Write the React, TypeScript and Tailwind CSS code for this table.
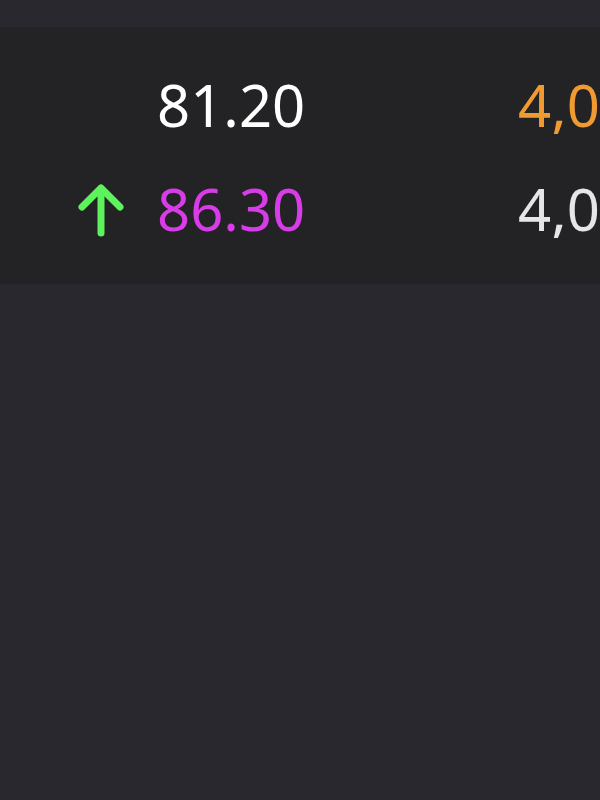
import React from "react";

const ArrowUp = () => (
  <svg width="48" height="56" viewBox="0 0 48 56" fill="none" stroke="#5ef35c" strokeWidth="7" strokeLinecap="round" strokeLinejoin="round">
    <path d="M24 50 V6" />
    <path d="M5 24 L24 5 L43 24" />
  </svg>
);

export default function App() {
  return (
    <div className="w-[600px] h-[800px] bg-[#29282e] overflow-hidden" style={{ fontFamily: '"Noto Sans", "Open Sans", sans-serif' }}>
      <div className="h-[28px] bg-[#29282e] border-b border-[#252428]" />
      <div className="h-[256px] bg-[#232325] pt-[25px] flex flex-col">
        <div className="h-[104px] flex items-center">
          <div className="w-[157px]"></div>
          <div className="w-[361px] text-[58px] text-white leading-none">81.20</div>
          <div className="flex-1 text-[58px] text-[#f09a32] leading-none whitespace-nowrap overflow-hidden">4,000</div>
        </div>
        <div className="h-[104px] flex items-center">
          <div className="w-[157px] flex justify-start pl-[77px] pt-[4px]">
            <ArrowUp />
          </div>
          <div className="w-[361px] text-[58px] text-[#d83ce8] leading-none">86.30</div>
          <div className="flex-1 text-[58px] text-[#e6e6e8] leading-none whitespace-nowrap overflow-hidden">4,000</div>
        </div>
      </div>
    </div>
  );
}
